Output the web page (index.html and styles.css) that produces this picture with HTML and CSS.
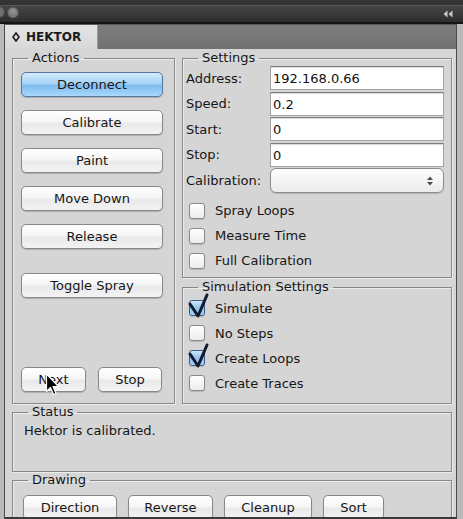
FILE: index.html
```html
<!DOCTYPE html>
<html>
<head>
<meta charset="utf-8">
<title>HEKTOR</title>
<link rel="stylesheet" href="styles.css">
</head>
<body>
<div class="titlebar">
  <svg class="lights" width="24" height="22" viewBox="0 0 24 22">
    <circle cx="-1" cy="12" r="5.5" fill="#6e6e6e" stroke="#4a4a4a"/>
    <circle cx="13" cy="12.5" r="5.5" fill="#7a7a7a" stroke="#4c4c4c"/>
    <circle cx="13" cy="11.5" r="3" fill="#8c8c8c"/>
  </svg>
  <svg class="collapse" width="12" height="10" viewBox="0 0 12 10">
    <path d="M5.5 1.5 L1.5 5 L5.5 8.5Z M10.5 1.5 L6.5 5 L10.5 8.5Z" fill="#c8c8c8"/>
  </svg>
</div>
<div class="frame">
  <div class="tabrow">
    <div class="tab">
      <svg class="diamond" width="8" height="10" viewBox="0 0 8 10"><path d="M4 1 L7 5 L4 9 L1 5Z" fill="none" stroke="#1c1c1c" stroke-width="1.6"/></svg>
      <span>HEKTOR</span>
    </div>
  </div>
  <div class="panel">
    <div class="top">
      <fieldset class="group actions">
        <legend>Actions</legend>
        <div class="actions-body">
          <button class="btn wide aqua">Deconnect</button>
          <button class="btn wide">Calibrate</button>
          <button class="btn wide">Paint</button>
          <button class="btn wide">Move Down</button>
          <button class="btn wide">Release</button>
          <button class="btn wide spaced">Toggle Spray</button>
          <div class="nav-row">
            <button class="btn next">Next</button>
            <button class="btn stop">Stop</button>
          </div>
        </div>
      </fieldset>
      <div class="rightcol">
        <fieldset class="group settings">
          <legend>Settings</legend>
          <div class="form">
            <label class="lbl">Address:</label><input class="field" type="text" value="192.168.0.66">
            <label class="lbl">Speed:</label><input class="field" type="text" value="0.2">
            <label class="lbl">Start:</label><input class="field" type="text" value="0">
            <label class="lbl">Stop:</label><input class="field" type="text" value="0">
            <label class="lbl cal">Calibration:</label>
            <div class="popup">
              <svg width="8" height="12" viewBox="0 0 8 12"><path d="M4 1.5 L7 5 L1 5Z M4 10.5 L7 7 L1 7Z" fill="#4a4a4a"/></svg>
            </div>
          </div>
          <div class="checks settings-checks">
            <div class="check"><span class="box"></span><span>Spray Loops</span></div>
            <div class="check"><span class="box"></span><span>Measure Time</span></div>
            <div class="check"><span class="box"></span><span>Full Calibration</span></div>
          </div>
        </fieldset>
        <fieldset class="group sim">
          <legend>Simulation Settings</legend>
          <div class="checks sim-checks">
            <div class="check"><span class="box on"><svg class="tick" width="24" height="28" viewBox="0 0 24 28"><path d="M3 12 L11 24 L20 3" fill="none" stroke="#101a30" stroke-width="3" stroke-linecap="round" stroke-linejoin="round"/></svg></span><span>Simulate</span></div>
            <div class="check"><span class="box"></span><span>No Steps</span></div>
            <div class="check"><span class="box on"><svg class="tick" width="24" height="28" viewBox="0 0 24 28"><path d="M3 12 L11 24 L20 3" fill="none" stroke="#101a30" stroke-width="3" stroke-linecap="round" stroke-linejoin="round"/></svg></span><span>Create Loops</span></div>
            <div class="check"><span class="box"></span><span>Create Traces</span></div>
          </div>
        </fieldset>
      </div>
    </div>
    <fieldset class="group status">
      <legend>Status</legend>
      <div class="status-body">Hektor is calibrated.</div>
    </fieldset>
    <fieldset class="group drawing">
      <legend>Drawing</legend>
      <div class="draw-row">
        <button class="btn b-dir">Direction</button>
        <button class="btn b-rev">Reverse</button>
        <button class="btn b-clean">Cleanup</button>
        <button class="btn b-sort">Sort</button>
      </div>
    </fieldset>
  </div>
</div>
<svg class="cursor" width="16" height="24" viewBox="0 0 16 24">
  <path d="M1.5 1 L1.5 18.5 L5.5 14.5 L8.5 21.5 L11 20.5 L8 13.5 L13.5 13.5 Z" fill="#000" stroke="#fff" stroke-width="1.2" stroke-linejoin="round"/>
</svg>
</body>
</html>
```
FILE: styles.css
```css
* { box-sizing: border-box; }
html, body { margin: 0; padding: 0; }
body {
  width: 463px;
  height: 519px;
  overflow: hidden;
  position: relative;
  background: #b9b9b9;
  font-family: "DejaVu Sans", "Liberation Sans", sans-serif;
  font-size: 13px;
  color: #161616;
}

.titlebar {
  height: 24px;
  display: flex;
  align-items: flex-start;
  justify-content: space-between;
  background: linear-gradient(#343434 0, #343434 5px, #575757 5px, #575757 6px, #454545 6px, #2d2d2d 22px);
  border-bottom: 2px solid #141414;
}
.lights { display: block; }
.collapse { display: block; margin: 9px 9px 0 0; }

.frame {
  margin: 0 6px 0 4px;
  height: 495px;
  border-left: 1px solid #4a4a4a;
  border-right: 1px solid #4a4a4a;
  border-bottom: 2px solid #3a3a3a;
  background: #d5d5d5;
  overflow: hidden;
}

.tabrow {
  height: 25px;
  display: flex;
  align-items: flex-end;
  background: linear-gradient(#7d7d7d, #717171);
  border-top: 1px solid #5a5a5a;
}
.tab {
  width: 93px;
  height: 24px;
  display: flex;
  align-items: center;
  gap: 6px;
  padding-left: 7px;
  background: linear-gradient(#e4e4e4, #d8d8d8);
  border-right: 1px solid #9a9a9a;
  font-weight: bold;
  font-size: 12px;
  color: #1a1a1a;
}
.diamond { display: block; }

.panel {
  padding: 2px 4px 0 7px;
}

.top {
  display: grid;
  grid-template-columns: 163px 270px;
  column-gap: 7px;
}

.group {
  margin: 0;
  padding: 0;
  min-width: 0;
  border: 1px solid #888888;
  box-shadow: 1px 1px 0 #ececec, inset 1px 1px 0 #ececec;
}
.group legend {
  margin-left: 15px;
  padding: 0 4px;
  font-size: 13px;
  line-height: 14px;
  color: #161616;
}

/* Actions */
.actions-body {
  height: 338px;
  display: flex;
  flex-direction: column;
  padding: 7px 10px 11px 8px;
}
.btn {
  font-family: "DejaVu Sans", "Liberation Sans", sans-serif;
  font-size: 13px;
  color: #161616;
  height: 25px;
  padding: 0;
  border: 1px solid #888888;
  border-radius: 5px;
  background: linear-gradient(#ffffff, #f6f6f6 45%, #e9e9e9 55%, #f3f3f3);
  box-shadow: 0 1px 1px rgba(0,0,0,0.18);
}
.btn.wide { width: 142px; margin-bottom: 13px; }
.btn.spaced { margin-top: 11px; }
.btn.aqua {
  border-color: #55779f;
  background: linear-gradient(#d4ebfc, #a6d2f6 45%, #7fbcef 55%, #a9d8fb);
}
.nav-row {
  margin-top: auto;
  display: flex;
  gap: 12px;
}
.btn.next { width: 65px; }
.btn.stop { width: 64px; }

/* Right column */
.rightcol {
  display: flex;
  flex-direction: column;
  gap: 2px;
}
.settings { height: 227px; }
.form {
  display: grid;
  grid-template-columns: 84px 174px;
  grid-auto-rows: 24px;
  row-gap: 1.5px;
  padding: 1px 7px 0 3px;
  align-items: center;
}
.lbl { font-size: 13px; color: #161616; }
.field {
  height: 24px;
  width: 174px;
  margin: 0;
  padding: 1px 2px 0;
  font-family: "DejaVu Sans", "Liberation Sans", sans-serif;
  font-size: 13px;
  color: #111;
  background: #fff;
  border: 1px solid #a4a4a4;
  border-top-color: #7c7c7c;
  box-shadow: inset 0 1px 1px rgba(0,0,0,0.15);
  outline: none;
}
.popup {
  height: 25px;
  margin-top: 1.5px;
  border: 1px solid #8c8c8c;
  border-radius: 6px;
  background: linear-gradient(#ffffff, #f4f4f4 50%, #ebebeb);
  box-shadow: 0 1px 1px rgba(0,0,0,0.15);
  display: flex;
  align-items: center;
  justify-content: flex-end;
  padding-right: 9px;
}
.cal { margin-top: 1.5px; }

.checks { display: flex; flex-direction: column; }
.settings-checks { padding: 6px 0 0 6px; }
.sim-checks { padding: 1.5px 0 0 6px; }
.check {
  height: 25px;
  display: flex;
  align-items: center;
  gap: 10px;
  font-size: 13px;
  color: #161616;
}
.box {
  position: relative;
  width: 16px;
  height: 16px;
  border: 1px solid #8a8a8a;
  border-radius: 3px;
  background: linear-gradient(#ffffff, #ececec);
  box-shadow: 0 1px 1px rgba(0,0,0,0.15);
  flex: none;
}
.box.on {
  border-color: #3c5c8c;
  background: linear-gradient(#cfe6fa, #8fc2ee 50%, #a9d3f5);
}
.tick {
  position: absolute;
  left: -3px;
  top: -9px;
}
.sim { height: 124px; }

/* Status */
.status {
  margin-top: 1px;
  height: 67px;
}
.status-body {
  padding: 4px 0 0 11px;
  line-height: 16px;
}

/* Drawing */
.drawing {
  margin-top: 1px;
  height: 60px;
}
.draw-row {
  display: flex;
  gap: 11px;
  padding: 8px 0 0 10px;
}
.draw-row .btn { height: 25px; }
.b-dir { width: 94px; }
.b-rev { width: 85px; }
.b-clean { width: 88px; }
.b-sort { width: 61px; }

.cursor {
  position: absolute;
  left: 45px;
  top: 373px;
}
```
